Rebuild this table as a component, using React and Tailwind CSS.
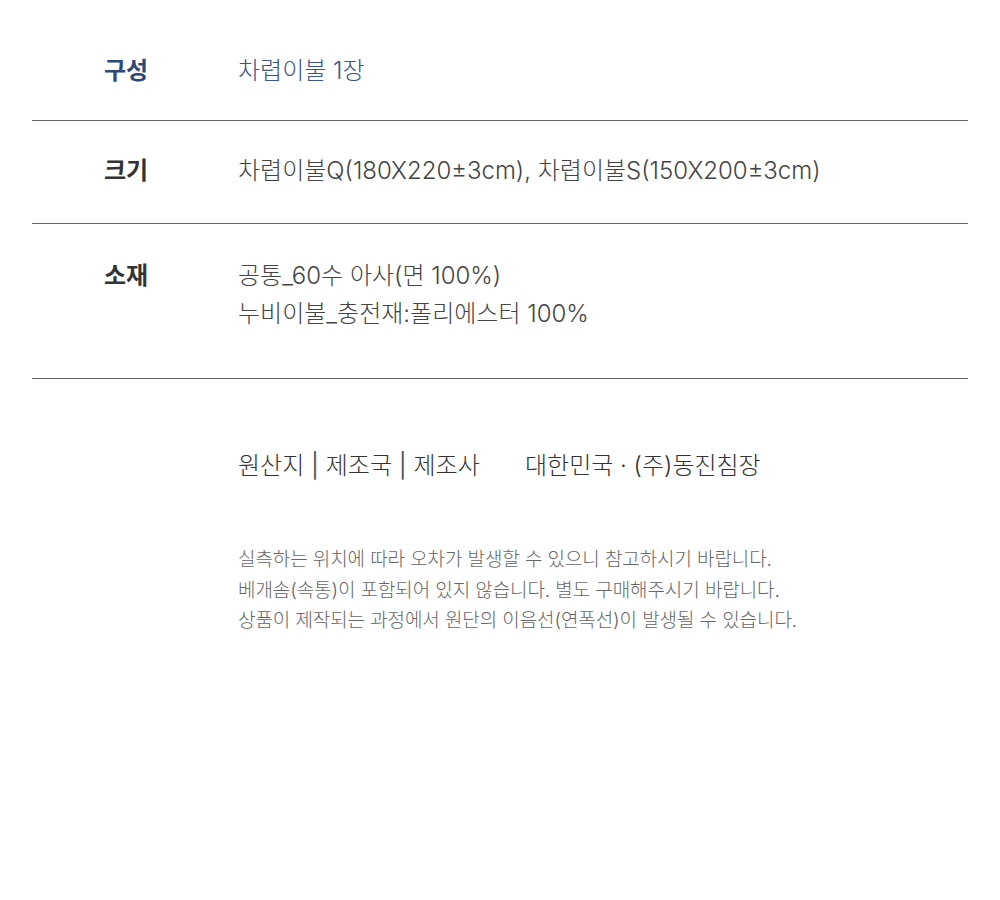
const rows = [
  {
    label: "구성",
    lines: ["차렵이불 1장"],
    accent: true,
    pad: "pt-[52px] pb-[30px]",
  },
  {
    label: "크기",
    lines: ["차렵이불Q(180X220±3cm), 차렵이불S(150X200±3cm)"],
    pad: "pt-[31px] pb-[33px]",
  },
  {
    label: "소재",
    lines: ["공통_60수 아사(면 100%)", "누비이불_충전재:폴리에스터 100%"],
    pad: "pt-[33px] pb-[45px]",
  },
];

const notes = [
  "실측하는 위치에 따라 오차가 발생할 수 있으니 참고하시기 바랍니다.",
  "베개솜(속통)이 포함되어 있지 않습니다. 별도 구매해주시기 바랍니다.",
  "상품이 제작되는 과정에서 원단의 이음선(연폭선)이 발생될 수 있습니다.",
];

const Bar = () => <span className="text-[#555555] font-normal">|</span>;

export default function App() {
  return (
    <div
      className="w-[1000px] h-[900px] bg-white px-8"
      style={{ fontFamily: '"Inter", "Noto Sans CJK KR", "Noto Sans", sans-serif' }}
    >
      {rows.map((row) => (
        <div
          key={row.label}
          className={`flex border-b border-[#666666] ${row.pad}`}
        >
          <div
            className={`w-[206px] shrink-0 pl-[72px] text-[24px] leading-[38px] font-semibold ${
              row.accent ? "text-[#2c4977]" : "text-[#333333]"
            }`}
          >
            {row.label}
          </div>
          <div
            className={`text-[24px] leading-[38px] font-light ${
              row.accent ? "text-[#3b5585]" : "text-[#444444]"
            }`}
          >
            {row.lines.map((l) => (
              <div key={l}>{l}</div>
            ))}
          </div>
        </div>
      ))}

      <div className="pl-[206px] pt-[68px]">
        <div className="flex text-[24px] leading-[38px] font-light text-[#333333]">
          <span className="w-[287px]">
            원산지 <Bar /> 제조국 <Bar /> 제조사
          </span>
          <span>대한민국 · (주)동진침장</span>
        </div>
        <div className="mt-[60px] text-[19px] leading-[30.5px] font-light text-[#666666] tracking-[-0.1px]">
          {notes.map((n) => (
            <div key={n}>{n}</div>
          ))}
        </div>
      </div>
    </div>
  );
}
